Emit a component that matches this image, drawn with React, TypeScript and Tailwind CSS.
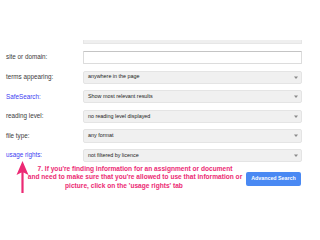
import React from "react";

const Arrow = () => (
  <svg width="6" height="5" viewBox="0 0 6 5" className="shrink-0">
    <path d="M1 1.5 L5 1.5 L3 4 Z" fill="#8a8a8a" />
  </svg>
);

type Row = { label: string; value?: string; blue?: boolean; white?: boolean };

const rows: Row[] = [
  { label: "site or domain:", white: true },
  { label: "terms appearing:", value: "anywhere in the page" },
  { label: "SafeSearch:", value: "Show most relevant results", blue: true },
  { label: "reading level:", value: "no reading level displayed" },
  { label: "file type:", value: "any format" },
  { label: "usage rights:", value: "not filtered by licence", blue: true },
];

export default function App() {
  return (
    <div
      className="w-[320px] h-[240px] bg-white overflow-hidden relative"
      style={{ fontFamily: '"Liberation Sans", Arial, sans-serif' }}
    >
      <div className="pt-[40px] pl-[6px] pr-[18px] flex flex-col">
        <div className="flex">
          <div className="w-[77px]" />
          <div className="w-[219px] h-[4px] bg-[#efefef] border-x border-b border-[#e6e6e6]" />
        </div>
        <div className="flex flex-col gap-[6.4px] mt-[7px]">
          {rows.map((r) => (
            <div key={r.label} className="flex items-center h-[13.2px]">
              <div
                className={`w-[77px] text-[6.3px] leading-none ${
                  r.blue ? "text-[#3d3df2]" : "text-[#3a3a3a]"
                }`}
              >
                {r.label}
              </div>
              {r.white ? (
                <div className="w-[219px] h-full bg-white border border-[#dcdcdc] border-t-[#c4c4c4] rounded-[1px]" />
              ) : (
                <div className="w-[219px] h-full bg-[#f0f0f0] border border-[#e4e4e4] rounded-[2px] flex items-center justify-between pl-[4px] pr-[2px]">
                  <span className="text-[5.4px] leading-none text-[#222]">{r.value}</span>
                  <Arrow />
                </div>
              )}
            </div>
          ))}
        </div>
      </div>

      <div className="flex items-start mt-[1px]">
        <div className="ml-[22px] w-[226px] mt-[2px] text-center text-[6.6px] leading-[8.4px] font-bold text-[#ec2a74]">
          <div>7. If you're finding information for an assignment or document</div>
          <div>and need to make sure that you're allowed to use that information or</div>
          <div className="pr-[22px]">picture, click on the 'usage rights' tab</div>
        </div>
        <div className="-ml-[2px] mt-[9px] w-[55px] h-[14px] bg-[#4a89f3] rounded-[2px] flex items-center justify-center text-white font-bold text-[5.3px] leading-none">
          Advanced Search
        </div>
      </div>

      <svg
        className="absolute left-[16px] top-[161px]"
        width="13"
        height="33"
        viewBox="0 0 13 33"
      >
        <path d="M6.5 0 L12.5 14 L7.6 11.5 L7.6 32 L5.4 32 L5.4 11.5 L0.5 14 Z" fill="#ec2a74" />
      </svg>
    </div>
  );
}
